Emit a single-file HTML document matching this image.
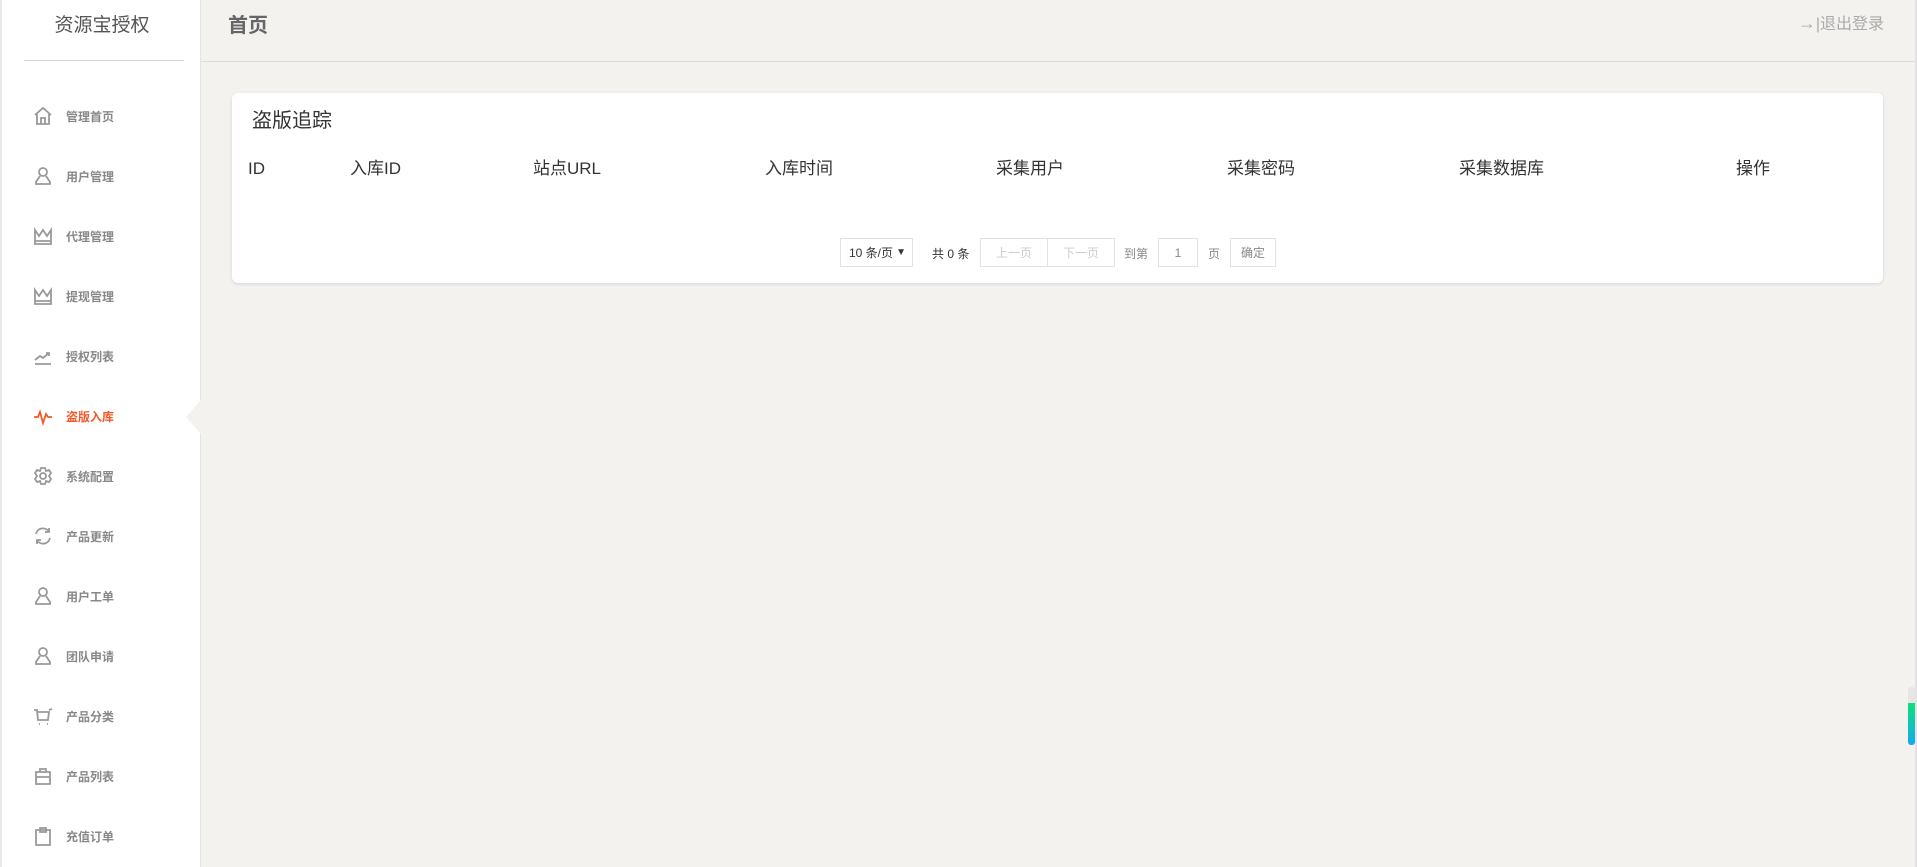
<!DOCTYPE html>
<html><head><meta charset="utf-8"><style>
*{margin:0;padding:0;box-sizing:border-box}
body{width:1917px;height:867px;overflow:hidden;background:#f3f2ef;font-family:"Liberation Sans","Noto Sans CJK SC",sans-serif;position:relative}
.side{position:absolute;left:0;top:0;width:201px;height:867px;background:#fff;border-right:1px solid #e4e4e4;border-left:2px solid #e8e8e8}
.logo{position:absolute;left:0;width:200px;top:10px;text-align:center;font-size:19px;color:#555}
.hr{position:absolute;left:22px;width:160px;top:60px;border-top:1px solid #d4d4d4}
.nav{position:absolute;left:31px;height:20px;display:flex;align-items:center;font-size:12px;color:#888;font-weight:bold}
.nav svg{width:20px;height:20px;margin-right:13px;fill:none;stroke:#999;stroke-width:1.8}
.nav.on{color:#f0592a}.nav.on svg{stroke:#f0592a}
.notch{position:absolute;left:186px;top:400px;width:0;height:0;border-top:17px solid transparent;border-bottom:17px solid transparent;border-right:15px solid #f3f2ef}
.head{position:absolute;left:201px;right:0;top:0;height:62px;border-bottom:1px solid #dcdcdc}
.ttl{position:absolute;left:27px;top:9px;font-size:20px;font-weight:bold;color:#666}
.out{position:absolute;right:33px;top:12px;font-size:16px;color:#aaa;line-height:22px}
.card{position:absolute;left:232px;top:93px;width:1651px;height:190px;background:#fff;border-radius:6px;box-shadow:0 1px 3px rgba(0,0,0,.12)}
.ct{position:absolute;left:20px;top:11px;font-size:20px;color:#333}
.th{position:absolute;top:64px;font-size:17px;color:#333;line-height:24px;height:24px}
.pg{position:absolute;top:145px;font-size:12px;color:#333}
.bx{position:absolute;top:145px;height:29px;border:1px solid #e2e2e2;font-size:12px;color:#ccc;display:flex;align-items:center;justify-content:center}
</style></head><body>
<div class="side">
<div class="logo">资源宝授权</div><div class="hr"></div>
<div class="nav" style="top:106px"><svg viewBox="0 0 20 20"><path d="M2 9 10 2l8 7M4 8v10h12V8M8 18v-6h4v6"/></svg>管理首页</div>
<div class="nav" style="top:166px"><svg viewBox="0 0 20 20"><circle cx="10" cy="6" r="4"/><path d="M7 10 3 16v2h14v-2l-4-6"/></svg>用户管理</div>
<div class="nav" style="top:226px"><svg viewBox="0 0 20 20"><path d="M2 4l4 6 4-6 4 6 4-6v14H2zM2 15h16"/></svg>代理管理</div>
<div class="nav" style="top:286px"><svg viewBox="0 0 20 20"><path d="M2 4l4 6 4-6 4 6 4-6v14H2zM2 15h16"/></svg>提现管理</div>
<div class="nav" style="top:346px"><svg viewBox="0 0 20 20"><path d="M2 14l5-4 3 2 6-5M13 7h3v3M2 18h16"/></svg>授权列表</div>
<div class="nav on" style="top:406px"><svg viewBox="0 0 20 20"><path d="M1 11h4l2-5 3 11 3-9 2 3h4"/></svg>盗版入库</div>
<div class="nav" style="top:466px"><svg viewBox="0 0 20 20"><circle cx="10" cy="10" r="3"/><path d="M8 2h4l1 3 3-1 2 3-2 3 2 3-2 3-3-1-1 3H8l-1-3-3 1-2-3 2-3-2-3 2-3 3 1z"/></svg>系统配置</div>
<div class="nav" style="top:526px"><svg viewBox="0 0 20 20"><path d="M3 8a7 7 0 0 1 13-2M17 12a7 7 0 0 1-13 2M16 2v4h-4M4 18v-4h4"/></svg>产品更新</div>
<div class="nav" style="top:586px"><svg viewBox="0 0 20 20"><circle cx="10" cy="6" r="4"/><path d="M7 10 3 16v2h14v-2l-4-6"/></svg>用户工单</div>
<div class="nav" style="top:646px"><svg viewBox="0 0 20 20"><circle cx="10" cy="6" r="4"/><path d="M7 10 3 16v2h14v-2l-4-6"/></svg>团队申请</div>
<div class="nav" style="top:706px"><svg viewBox="0 0 20 20"><path d="M1 4h3l1 10h10l1-8H4M16 4l3-1M6 18h1M14 18h1"/></svg>产品分类</div>
<div class="nav" style="top:766px"><svg viewBox="0 0 20 20"><path d="M3 6h14v12H3zM7 6V3h6v3M3 11h14"/></svg>产品列表</div>
<div class="nav" style="top:826px"><svg viewBox="0 0 20 20"><path d="M3 4h14v15H3zM7 2h6v4H7z"/></svg>充值订单</div>
</div>
<div class="notch"></div>
<div class="head"><div class="ttl">首页</div><div class="out"><span style="font-size:18px">→</span>|退出登录</div></div>
<div class="card">
<div class="ct">盗版追踪</div>
<div class="th" style="left:16px">ID</div>
<div class="th" style="left:118px">入库ID</div>
<div class="th" style="left:301px">站点URL</div>
<div class="th" style="left:533px">入库时间</div>
<div class="th" style="left:764px">采集用户</div>
<div class="th" style="left:995px">采集密码</div>
<div class="th" style="left:1227px">采集数据库</div>
<div class="th" style="left:1504px">操作</div>
<div class="bx" style="left:608px;width:73px;color:#333;justify-content:space-between;padding:0 6px 0 8px">10 条/页<span style="font-size:10px">▼</span></div>
<div class="pg" style="left:700px;top:152px">共 0 条</div>
<div class="bx" style="left:748px;width:68px">上一页</div>
<div class="bx" style="left:815px;width:68px">下一页</div>
<div class="pg" style="left:892px;top:152px;color:#888">到第</div>
<div class="bx" style="left:926px;width:40px;color:#888">1</div>
<div class="pg" style="left:976px;top:152px;color:#888">页</div>
<div class="bx" style="left:998px;width:46px;color:#888">确定</div>
</div>
<div style="position:absolute;left:1915px;top:0;width:2px;height:867px;background:#e2e2e2"></div>
<div style="position:absolute;left:1908px;top:687px;width:7px;height:58px;border-radius:3px;background:linear-gradient(#e6e6e6 0 16px,#0ee07a 16px,#14aaf0)"></div>
</body></html>
